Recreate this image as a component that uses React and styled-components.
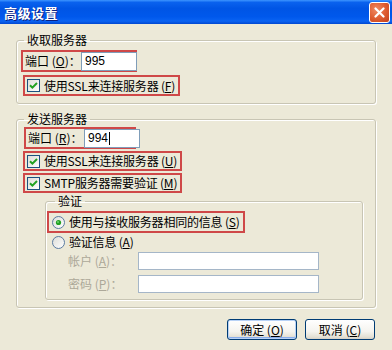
import React from "react";
import styled, { createGlobalStyle } from "styled-components";

const GlobalStyle = createGlobalStyle`
  html, body {
    margin: 0;
    padding: 0;
    background: #ece9d8;
  }
  body {
    font-family: "Noto Sans CJK SC", "DejaVu Sans", sans-serif;
    font-size: 12px;
    color: #000;
  }
`;

const CheckIcon = () => (
  <IconBox>
    <svg width="13" height="13" viewBox="0 0 13 13">
      <defs>
        <linearGradient id="cbg" x1="0" y1="0" x2="1" y2="1">
          <stop offset="0" stopColor="#dcdcd7" />
          <stop offset="1" stopColor="#ffffff" />
        </linearGradient>
      </defs>
      <rect x="0.5" y="0.5" width="12" height="12" fill="url(#cbg)" stroke="#1c5180" />
      <path d="M3 6.2 L5.4 8.6 L10 4" fill="none" stroke="#21a121" strokeWidth="2" />
    </svg>
  </IconBox>
);

const RadioIcon = ({ on }) => (
  <IconBox $ml={1}>
    <svg width="13" height="13" viewBox="0 0 13 13">
      <defs>
        <linearGradient id="rbg" x1="0" y1="0" x2="1" y2="1">
          <stop offset="0" stopColor="#dcdcd7" />
          <stop offset="1" stopColor="#ffffff" />
        </linearGradient>
      </defs>
      <circle cx="6.5" cy="6.5" r="6" fill="url(#rbg)" stroke="#5a7aa0" />
      {on && <circle cx="6.5" cy="6.5" r="2.6" fill="#21a121" />}
      {on && <circle cx="6" cy="6" r="1" fill="#6fd36f" />}
    </svg>
  </IconBox>
);

const CloseIcon = () => (
  <svg width="11" height="11" viewBox="0 0 11 11">
    <path d="M1.5 1.5 L9.5 9.5 M9.5 1.5 L1.5 9.5" stroke="#fff" strokeWidth="2.2" strokeLinecap="round" />
  </svg>
);

const App = () => {
  return (
    <Window>
      <GlobalStyle />
      <TitleBar>
        <Title>高级设置</Title>
        <CloseButton>
          <CloseIcon />
        </CloseButton>
      </TitleBar>

      <Body>
        <Group $pt={3} $pb={7}>
          <Legend>收取服务器</Legend>
          <Stack $gap={3}>
            <Mark $w={116} $h={22}>
              <Label>
                端口 (<u>O</u>)：
              </Label>
              <Input>995</Input>
            </Mark>
            <Mark $h={21} $ml={2}>
              <CheckIcon />
              <Text>
                使用SSL来连接服务器 (<u>F</u>)
              </Text>
            </Mark>
          </Stack>
        </Group>

        <Group $mt={8} $pt={1} $pb={7}>
          <Legend>发送服务器</Legend>
          <Stack $gap={2}>
            <Mark $w={112} $h={22} $ml={3}>
              <Label>
                端口 (<u>R</u>)：
              </Label>
              <Input>
                994
                <Caret />
              </Input>
            </Mark>
            <Mark $h={20} $ml={2}>
              <CheckIcon />
              <Text>
                使用SSL来连接服务器 (<u>U</u>)
              </Text>
            </Mark>
            <Mark $h={20} $ml={2}>
              <CheckIcon />
              <Text>
                SMTP服务器需要验证 (<u>M</u>)
              </Text>
            </Mark>
          </Stack>

          <Inner>
            <InnerLegend>验证</InnerLegend>
            <Stack $gap={1}>
              <Mark $h={22}>
                <RadioIcon on />
                <Text>
                  使用与接收服务器相同的信息 (<u>S</u>)
                </Text>
              </Mark>
              <Mark $h={16} $off>
                <RadioIcon />
                <Text>
                  验证信息 (<u>A</u>)
                </Text>
              </Mark>
            </Stack>
            <Fields>
              <FieldRow>
                <Muted>
                  帐户 (<u>A</u>)：
                </Muted>
                <Field />
              </FieldRow>
              <FieldRow>
                <Muted>
                  密码 (<u>P</u>)：
                </Muted>
                <Field />
              </FieldRow>
            </Fields>
          </Inner>
        </Group>

        <Buttons>
          <Button $default>
            确定 (<u>O</u>)
          </Button>
          <Button>
            取消 (<u>C</u>)
          </Button>
        </Buttons>
      </Body>
    </Window>
  );
};

export default App;

const Window = styled.div`
  width: 392px;
  height: 350px;
  background: #ece9d8;
  display: flex;
  flex-direction: column;
  overflow: hidden;
`;

const TitleBar = styled.div`
  height: 24px;
  flex: none;
  display: flex;
  align-items: center;
  justify-content: space-between;
  padding: 0 2px 0 4px;
  background: linear-gradient(
    to bottom,
    #3d95ff 0%,
    #0a62ee 10%,
    #0055e5 35%,
    #0058ec 70%,
    #0a63f2 88%,
    #0047d0 100%
  );
`;

const Title = styled.div`
  color: #fff;
  font-size: 13px;
  font-weight: bold;
  letter-spacing: 0.5px;
  text-shadow: 1px 1px 0 #0a1f80;
`;

const CloseButton = styled.div`
  width: 19px;
  height: 19px;
  border: 1px solid #fff;
  border-radius: 3px;
  display: flex;
  align-items: center;
  justify-content: center;
  background: radial-gradient(circle at 35% 35%, #f08a64 0%, #dd5a2e 55%, #c2401c 100%);
`;

const Body = styled.div`
  padding-top: 9px;
  display: flex;
  flex-direction: column;
`;

const Group = styled.fieldset`
  margin: ${(p) => p.$mt || 0}px 16px 0 16px;
  padding: ${(p) => p.$pt}px 4px ${(p) => p.$pb}px 4px;
  border: 1px solid #c8c5b4;
  border-radius: 3px;
  box-shadow: inset 1px 1px 0 #fff, 1px 1px 0 #fff;
  min-width: 0;
`;

const Legend = styled.legend`
  margin-left: 3px;
  padding: 0 3px;
  line-height: 14px;
  font-size: 12px;
`;

const Stack = styled.div`
  display: flex;
  flex-direction: column;
  align-items: flex-start;
  gap: ${(p) => p.$gap}px;
`;

const Mark = styled.div`
  box-sizing: border-box;
  width: ${(p) => (p.$w ? `${p.$w}px` : "auto")};
  height: ${(p) => p.$h}px;
  margin-left: ${(p) => p.$ml || 0}px;
  border: 2px solid ${(p) => (p.$off ? "transparent" : "#cf4848")};
  padding: 0 3px 0 2px;
  display: flex;
  align-items: center;
  gap: 4px;
  white-space: nowrap;
`;

const IconBox = styled.span`
  flex: none;
  display: flex;
  width: 13px;
  height: 13px;
  margin-left: ${(p) => p.$ml || 0}px;
`;

const Label = styled.span`
  flex: none;
  width: 52px;
  line-height: 14px;
`;

const Text = styled.span`
  line-height: 14px;
  letter-spacing: -0.2px;
`;

const Input = styled.div`
  box-sizing: border-box;
  flex: none;
  width: 56px;
  height: 19px;
  margin-left: auto;
  border: 1px solid #7f9db9;
  background: #fff;
  padding: 0 3px;
  display: flex;
  align-items: center;
  font-family: "Liberation Sans", sans-serif;
  font-size: 12px;
`;

const Caret = styled.span`
  display: inline-block;
  width: 1px;
  height: 13px;
  margin-left: 1px;
  background: #000;
`;

const Inner = styled.fieldset`
  margin: 1px 8px 0 24px;
  padding: 3px 4px 6px 1px;
  border: 1px solid #c8c5b4;
  border-radius: 3px;
  box-shadow: inset 1px 1px 0 #fff, 1px 1px 0 #fff;
  min-width: 0;
`;

const InnerLegend = styled(Legend)`
  margin-left: 8px;
`;

const Fields = styled.div`
  margin-top: 2px;
  display: flex;
  flex-direction: column;
  gap: 5px;
`;

const FieldRow = styled.div`
  display: flex;
  align-items: center;
  padding-left: 21px;
`;

const Muted = styled.span`
  width: 70px;
  flex: none;
  color: #aca899;
  line-height: 14px;
`;

const Field = styled.div`
  box-sizing: border-box;
  width: 181px;
  height: 18px;
  border: 1px solid #a5b6c8;
  background: #fff;
`;

const Buttons = styled.div`
  margin-top: 11px;
  padding-right: 17px;
  display: flex;
  justify-content: flex-end;
  gap: 8px;
`;

const Button = styled.div`
  box-sizing: border-box;
  width: 70px;
  height: 21px;
  border: 1px solid #003c74;
  border-radius: 3px;
  display: flex;
  align-items: center;
  justify-content: center;
  background: linear-gradient(to bottom, #ffffff 0%, #f5f4ef 60%, #e3e0d4 90%, #d6d0c5 100%);
  box-shadow: ${(p) =>
    p.$default ? "inset 0 0 0 1px #b8d2f6, inset 0 -1px 0 1px #89adec" : "none"};
  font-size: 12px;
  line-height: 14px;
`;
